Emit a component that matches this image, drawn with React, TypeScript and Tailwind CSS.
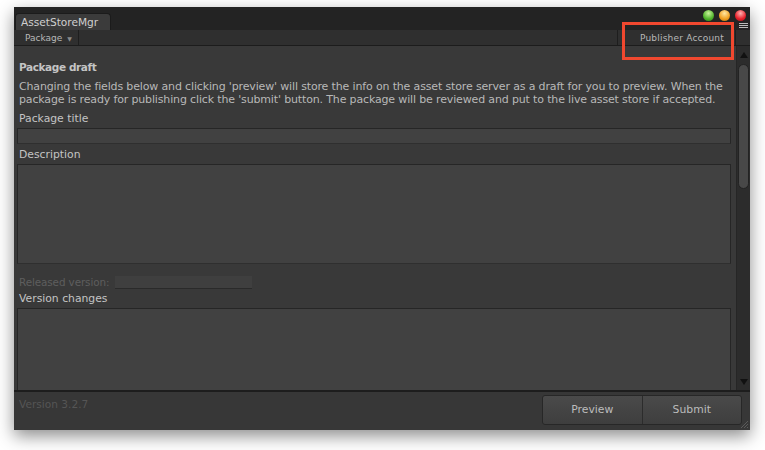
const font = { fontFamily: '"DejaVu Sans", "Lucida Grande", sans-serif' }

function Field({ className = "" }: { className?: string }) {
  return (
    <div
      className={`border border-[#262626] border-b-[#2f2f2f] bg-[#414141] ${className}`}
    />
  )
}

function Scrollbar() {
  return (
    <div className="flex w-[14px] flex-col items-center border-l border-[#262626] bg-[#2c2c2c]">
      <div className="mt-[6px] h-0 w-0 border-x-[4px] border-b-[6px] border-x-transparent border-b-[#111]" />
      <div className="mt-[6px] h-[125px] w-[11px] rounded-full border border-[#232323] bg-[#484848]" />
      <div className="flex-1" />
      <div className="mb-[5px] h-0 w-0 border-x-[4px] border-t-[6px] border-x-transparent border-t-[#111]" />
    </div>
  )
}

export default function App() {
  return (
    <div className="relative h-[450px] w-[765px] bg-white" style={font}>
      <div className="absolute left-[14px] top-[7px] flex h-[423px] w-[736px] flex-col bg-[#232323] shadow-[0_6px_16px_rgba(0,0,0,0.45)]">
        {/* title strip with tab and window buttons */}
        <div className="flex h-[23px] items-end">
          <div className="ml-px flex h-[17px] w-[96px] items-center rounded-t-[4px] border border-b-0 border-[#1b1b1b] bg-[#3b3b3b] pl-[5px] text-[10.6px] leading-none text-[#cfcfcf]">
            AssetStoreMgr
          </div>
          <div className="flex-1" />
          <div className="mb-[9px] mr-[4px] flex gap-[5px]">
            <span className="h-[11px] w-[11px] rounded-full bg-[radial-gradient(circle_at_50%_30%,#c8f29a,#4fb32a_60%,#2f7a18)]" />
            <span className="h-[11px] w-[11px] rounded-full bg-[radial-gradient(circle_at_50%_30%,#ffe7a0,#f0a020_60%,#b06a10)]" />
            <span className="h-[11px] w-[11px] rounded-full bg-[radial-gradient(circle_at_50%_30%,#ffb0b0,#e8202a_60%,#9c1018)]" />
          </div>
        </div>
        {/* toolbar */}
        <div className="relative flex h-[16px] items-center border-b border-[#1c1c1c] bg-[#2f2f2f] text-[9px] text-[#b8b8b8]">
          <div className="flex h-full items-center gap-[5px] border-r border-[#1e1e1e] pl-[11px] pr-[6px] pt-[2px]">
            Package
            <span className="text-[6px] text-[#8a8a8a]">▼</span>
          </div>
          <div className="flex-1" />
          <div className="flex h-full w-[118px] items-center border-l border-[#1e1e1e] pl-[22px] pt-[2px] tracking-[0.2px]">
            Publisher Account
          </div>
          <div className="h-full w-[15px] border-l border-[#1e1e1e]" />
          <div className="absolute -top-[7px] right-[2px] flex flex-col gap-[1px]">
            <span className="h-px w-[9px] bg-[#bbb]" />
            <span className="h-px w-[9px] bg-[#bbb]" />
            <span className="h-px w-[9px] bg-[#bbb]" />
          </div>
        </div>
        {/* content */}
        <div className="flex h-[344px] bg-[#393939]">
          <div className="flex-1 overflow-hidden pl-[3px] pr-[5px] text-[10.8px] leading-[13px] text-[#c4c4c4]">
            <div className="mt-[15px] pl-[2px] text-[10.5px] font-bold tracking-[-0.4px]">Package draft</div>
            <p className="mt-[6px] pl-[2px] text-[11px] tracking-[-0.15px] text-[#b8b8b8]">
              Changing the fields below and clicking 'preview' will store the info on the asset store server as a draft for you to preview. When the package is ready for publishing click the 'submit' button. The package will be reviewed and put to the live asset store if accepted.
            </p>
            <div className="mt-[6px] pl-[2px]">Package title</div>
            <Field className="mt-[3px] h-[16px]" />
            <div className="mt-[4px] pl-[2px]">Description</div>
            <Field className="mt-[3px] h-[100px]" />
            <div className="mt-[12px] flex items-center whitespace-nowrap pl-[2px] text-[#5e5e5e]">
              <span className="w-[96px] text-[10.4px] tracking-[-0.1px]">Released version:</span>
              <div className="h-[13px] w-[137px] border-b border-[#2a2a2a] bg-[#3f3f3f]" />
            </div>
            <div className="mt-[3px] pl-[2px]">Version changes</div>
            <Field className="mt-[3px] h-[100px]" />
          </div>
          <Scrollbar />
        </div>
        {/* footer */}
        <div className="relative flex flex-1 items-start justify-between border-t-2 border-[#1d1d1d] bg-[#373737]">
          <div className="mt-[5px] pl-[5px] text-[10.6px] text-[#555555]">Version 3.2.7</div>
          <div className="mr-[8px] mt-[3px] flex h-[30px] w-[200px] overflow-hidden rounded-[3px] border border-[#272727] bg-gradient-to-b from-[#4a4a4a] to-[#3e3e3e] text-[10.8px] text-[#bcbcbc]">
            <div className="flex flex-1 items-center justify-center border-r border-[#2c2c2c]">Preview</div>
            <div className="flex flex-1 items-center justify-center">Submit</div>
          </div>
          <svg className="absolute bottom-px right-px" width="10" height="10" viewBox="0 0 10 10">
            <path d="M9 2 L2 9 M9 5 L5 9 M9 8 L8 9" stroke="#5a5a5a" strokeWidth="1" />
          </svg>
        </div>
      </div>
      {/* red annotation box */}
      <div className="absolute left-[622px] top-[22px] h-[38px] w-[112px] border-[3px] border-[#f0482f]" />
    </div>
  )
}
